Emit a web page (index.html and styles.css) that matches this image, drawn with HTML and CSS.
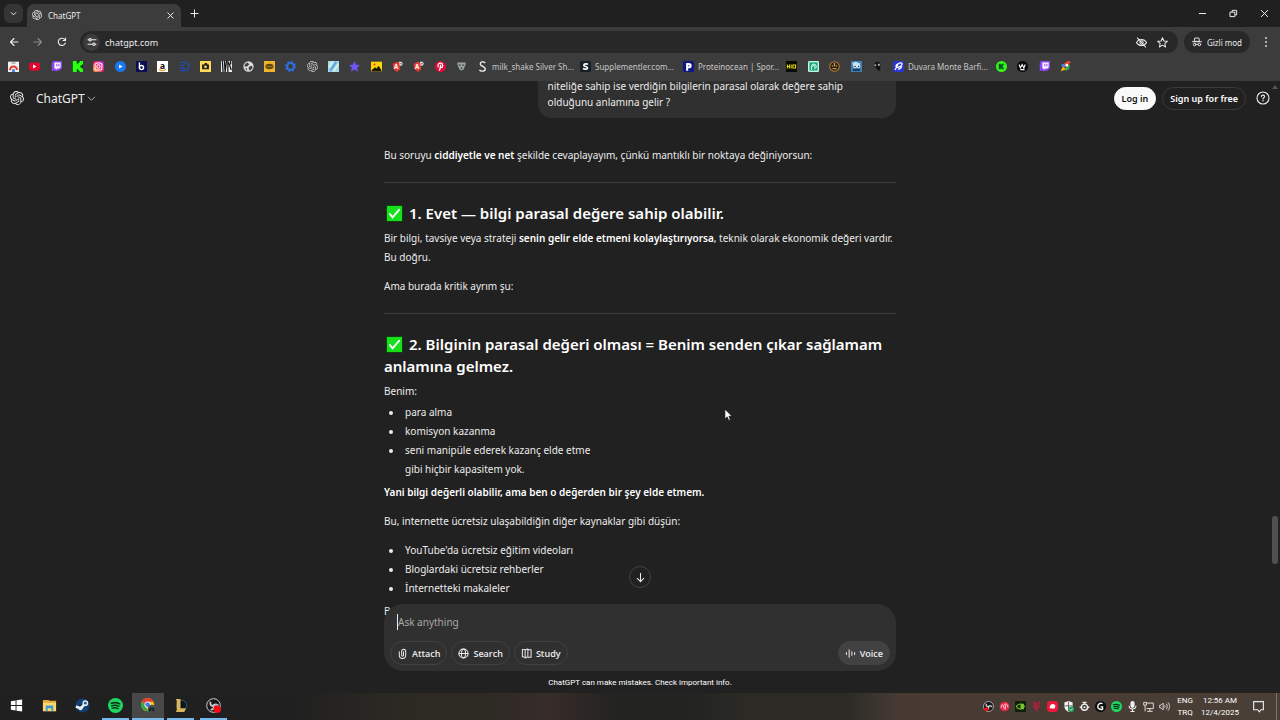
FILE: index.html
```html
<!DOCTYPE html>
<html lang="tr">
<head>
<meta charset="utf-8">
<title>ChatGPT</title>
<link rel="stylesheet" href="styles.css">
</head>
<body>
<svg class="defs" aria-hidden="true">
  <symbol id="knot" viewBox="0 0 24 24"><path fill="currentColor" d="M22.2819 9.8211a5.9847 5.9847 0 0 0-.5157-4.9108 6.0462 6.0462 0 0 0-6.5098-2.9A6.0651 6.0651 0 0 0 4.9807 4.1818a5.9847 5.9847 0 0 0-3.9977 2.9 6.0462 6.0462 0 0 0 .7427 7.0966 5.98 5.98 0 0 0 .511 4.9107 6.051 6.051 0 0 0 6.5146 2.9001A5.9847 5.9847 0 0 0 13.2599 24a6.0557 6.0557 0 0 0 5.7718-4.2058 5.9894 5.9894 0 0 0 3.9977-2.9001 6.0557 6.0557 0 0 0-.7475-7.0729zm-9.022 12.6081a4.4755 4.4755 0 0 1-2.8764-1.0408l.1419-.0804 4.7783-2.7582a.7948.7948 0 0 0 .3927-.6813v-6.7369l2.02 1.1686a.071.071 0 0 1 .038.052v5.5826a4.504 4.504 0 0 1-4.4945 4.4944zm-9.6607-4.1254a4.4708 4.4708 0 0 1-.5346-3.0137l.142.0852 4.783 2.7582a.7712.7712 0 0 0 .7806 0l5.8428-3.3685v2.3324a.0804.0804 0 0 1-.0332.0615L9.74 19.9502a4.4992 4.4992 0 0 1-6.1408-1.6464zM2.3408 7.8956a4.485 4.485 0 0 1 2.3655-1.9728V11.6a.7664.7664 0 0 0 .3879.6765l5.8144 3.3543-2.0201 1.1685a.0757.0757 0 0 1-.071 0l-4.8303-2.7865A4.504 4.504 0 0 1 2.3408 7.872zm16.5963 3.8558L13.1038 8.364 15.1192 7.2a.0757.0757 0 0 1 .071 0l4.8303 2.7913a4.4944 4.4944 0 0 1-.6765 8.1042v-5.6772a.79.79 0 0 0-.407-.667zm2.0107-3.0231l-.142-.0852-4.7735-2.7818a.7759.7759 0 0 0-.7854 0L9.409 9.2297V6.8974a.0662.0662 0 0 1 .0284-.0615l4.8303-2.7866a4.4992 4.4992 0 0 1 6.6802 4.66zM8.3065 12.863l-2.02-1.1638a.0804.0804 0 0 1-.038-.0567V6.0742a4.4992 4.4992 0 0 1 7.3757-3.4537l-.142.0805L8.704 5.459a.7948.7948 0 0 0-.3927.6813zm1.0976-2.3654l2.602-1.4998 2.6069 1.4998v2.9994l-2.5974 1.4997-2.6067-1.4997Z"/></symbol>
  <symbol id="check" viewBox="0 0 18 18"><path fill="#0a3d0a" d="M0 0h18v18H0z"/><path fill="#16e01c" d="M1 1h16v16H1z"/><path fill="none" stroke="#fff" stroke-width="2" stroke-linecap="round" d="M4 9.500l3 3.500L14 5"/></symbol>
  <symbol id="twitch" viewBox="0 0 16 16"><path fill="#8d45f5" d="M3 0h13v10l-4 4H9l-2 2v-2H1V3z"/><path fill="#fff" d="M5 2h9v7l-2 2H9l-2 2v-2H5z"/><path stroke="#8d45f5" stroke-width="1.500" d="M8.500 4v4M11.500 4v4"/></symbol>
  <symbol id="spotify" viewBox="0 0 16 16"><circle cx="8" cy="8" r="8" fill="#1ed760"/><path fill="none" stroke="#10301b" stroke-linecap="round" stroke-width="1.600" d="M3.500 5.600c3-1 6.500-.7 9 .7M4 8.300c2.600-.8 5.400-.5 7.700.7M4.500 10.800c2.200-.6 4.400-.4 6.200.6"/></symbol>
  <symbol id="obs" viewBox="0 0 16 16"><circle cx="8" cy="8" r="7.300" fill="#17171a" stroke="#d8d8d8"/><path fill="none" stroke="#c9c9c9" stroke-width="2" d="M8 8c-3 1-4-2-3-4M8 8c2-2 5-1 5 1M8 8c1 3-1 5-3 4"/></symbol>
  <symbol id="ab" viewBox="0 0 16 16"><path fill="#e13b33" d="M1 4l6-3 4 2 1 9-5 4-5-4z"/><text x="3" y="12" font-size="9" font-weight="700" fill="#fff">A</text><path fill="#ddd" d="M10 1h4l2 3-2 3h-3z"/><path stroke="#444" d="M11 4h4"/></symbol>
</svg>

<div class="browser">
  <header class="tabstrip">
    <button class="tabsearch" aria-label="Sekmelerde ara"><svg class="s9" viewBox="0 0 10 10"><path class="ln" stroke-width="1.500" d="M2.500 4L5 6.500 7.500 4"/></svg></button>
    <div class="tab">
      <svg class="s10"><use href="#knot"/></svg><span>ChatGPT</span>
      <button aria-label="Sekmeyi kapat"><svg class="s9" viewBox="0 0 10 10"><path class="ln" d="M2 2l6 6M8 2L2 8"/></svg></button>
    </div>
    <button class="newtab" aria-label="Yeni sekme"><svg class="s9" viewBox="0 0 10 10"><path class="ln" d="M5 1v8M1 5h8"/></svg></button>
    <div class="winctl">
      <button aria-label="Simge durumuna küçült"><svg class="s9" viewBox="0 0 10 10"><path class="ln" d="M1.500 5h7"/></svg></button>
      <button aria-label="Geri yükle"><svg class="s9" viewBox="0 0 10 10"><path class="ln" d="M1.500 3.500h5v5h-5zM3.500 3V1.500h5v5H7"/></svg></button>
      <button aria-label="Kapat"><svg class="s9" viewBox="0 0 10 10"><path class="ln" d="M1.500 1.500l7 7M8.500 1.500l-7 7"/></svg></button>
    </div>
  </header>

  <nav class="toolbar">
    <button aria-label="Geri"><svg class="s10" viewBox="0 0 10 10"><path class="ln" d="M9 5H1.500M5 1.500L1.500 5 5 8.500"/></svg></button>
    <button class="dim" aria-label="İleri"><svg class="s10" viewBox="0 0 10 10"><path class="ln" d="M1 5h7.500M5 1.500L8.500 5 5 8.500"/></svg></button>
    <button aria-label="Yenile"><svg class="s10" viewBox="0 0 10 10"><path class="ln" d="M8.300 6A3.600 3.600 0 1 1 7.800 2.700M8.500 1v2.500H6"/></svg></button>
    <div class="omnibox">
      <span class="site"><svg class="s10" viewBox="0 0 10 10"><path class="ln" d="M1 2.800h1M5 2.800h4M1 7.200h4M8.500 7.200h.5"/><circle class="ln" cx="3.200" cy="2.800" r="1.200"/><circle class="ln" cx="6.900" cy="7.200" r="1.200"/></svg></span>
      <input type="text" value="chatgpt.com" aria-label="Adres çubuğu">
      <svg class="s12" viewBox="0 0 12 12"><path class="ln" d="M.5 6c2.500-4.500 8.500-4.500 11 0-2.500 4.500-8.500 4.500-11 0zM1.500 1l9 10"/><circle class="ln" cx="6" cy="6" r="1.800"/></svg>
      <svg class="s12" viewBox="0 0 12 12"><path class="ln" d="M6 .8l1.500 3.500 3.900.3-2.900 2.500.9 3.800L6 8.900l-3.400 2 .9-3.800L.6 4.600l3.900-.3z"/></svg>
    </div>
    <button class="incog"><svg class="s10" viewBox="0 0 12 12"><path class="ln" d="M3.800 1.200h4.400l.8 4H3z"/><path class="ln" d="M.5 5.700h11M4.800 9c.8-.4 1.600-.4 2.400 0"/><circle class="ln" cx="3.200" cy="9" r="1.600"/><circle class="ln" cx="8.800" cy="9" r="1.600"/></svg>Gizli mod</button>
    <button class="kebab" aria-label="Menü"><svg class="s10" viewBox="0 0 10 10"><g fill="#d5d5d5"><circle cx="5" cy="1" r="1"/><circle cx="5" cy="5" r="1"/><circle cx="5" cy="9" r="1"/></g></svg></button>
  </nav>

  <nav class="bookmarks" aria-label="Yer işaretleri">
    <div class="icons">
      <a href="#" aria-label="Web Mağazası"><svg viewBox="0 0 16 16"><path fill="#f1f1f1" d="M0 1h16v15H0z"/><path fill="#9aa" d="M5 2h6v2H5z"/><path fill="none" stroke="#e33b2e" stroke-width="3" d="M3 13a5 5 0 0 1 10 0"/><path fill="#3c82f0" d="M6 12h4v4H6z"/></svg></a>
      <a href="#" aria-label="YouTube"><svg viewBox="0 0 16 16"><rect y="2" width="16" height="12" rx="3" fill="#e2062c"/><path fill="#fff" d="M6 5l5 3-5 3z"/></svg></a>
      <a href="#" aria-label="Twitch"><svg><use href="#twitch"/></svg></a>
      <a href="#" aria-label="Kick"><svg viewBox="0 0 16 16"><path fill="#031" d="M0 0h16v16H0z"/><path fill="#2bff12" d="M1 0h6v4h2V2h2V0h5v5h-2v2h-2v2h2v2h2v5h-5v-2H9v-2H7v4H1z"/></svg></a>
      <a href="#" aria-label="Instagram"><svg viewBox="0 0 16 16"><defs><linearGradient id="ig" x1="0" y1="1" x2="1" y2="0"><stop offset="0" stop-color="#ffc13b"/><stop offset=".45" stop-color="#f5235f"/><stop offset="1" stop-color="#a22be0"/></linearGradient></defs><rect width="16" height="16" rx="4" fill="url(#ig)"/><g fill="none" stroke="#fff" stroke-width="1.500"><rect x="3" y="3" width="10" height="10" rx="3"/><circle cx="8" cy="8" r="2.400"/></g></svg></a>
      <a href="#" aria-label="Video"><svg viewBox="0 0 16 16"><circle cx="8" cy="8" r="8" fill="#1778f2"/><path fill="#fff" d="M6 5l5 3-5 3z"/></svg></a>
      <a href="#" aria-label="Bynogame"><svg viewBox="0 0 16 16"><path fill="#0a0d55" d="M0 0h16v16H0z"/><path fill="none" stroke="#fff" stroke-width="2" d="M5 2v9"/><circle cx="8" cy="9.500" r="3" fill="none" stroke="#fff" stroke-width="2"/></svg></a>
      <a href="#" aria-label="Amazon"><svg viewBox="0 0 16 16"><path fill="#fff" d="M0 0h16v16H0z"/><text x="4" y="11" font-size="13" font-weight="700" fill="#111">a</text><path fill="none" stroke="#f79a1c" stroke-width="1.500" d="M3 12c3 2.500 7 2.500 10 0"/></svg></a>
      <a href="#" aria-label="Dolap"><svg viewBox="0 0 16 16"><path fill="none" stroke="#244bb0" stroke-width="2" d="M2 2h7c7 0 7 12 0 12H2M2 6h6M0 10h7l1 4"/></svg></a>
      <a href="#" aria-label="Kamera"><svg viewBox="0 0 16 16"><path fill="#ffd95a" d="M0 0h16v16H0z"/><path fill="#222" d="M3 5h3l1-2h3l1 2h2v7H3z"/><circle cx="8" cy="8.500" r="2" fill="#ffd95a"/></svg></a>
      <a href="#" aria-label="Wannart"><svg viewBox="0 0 16 16"><path fill="#eee" d="M0 0h16v16H0z"/><path fill="none" stroke="#111" stroke-width="1.800" d="M2 0l1 16M5 0l1 16 2-16M10 0v16M11 2l4 11M14 0v5"/></svg></a>
      <a href="#" aria-label="Web"><svg viewBox="0 0 16 16"><circle cx="8" cy="8" r="7.500" fill="#ddd"/><path fill="#444" d="M3 4l4-2 2 3-3 3-4 0zM9 8l4-1 1 3-4 4-2-3zM3 10l3 1v3z"/></svg></a>
      <a href="#" aria-label="Burger"><svg viewBox="0 0 16 16"><path fill="#eeb62d" d="M0 0h16v16H0z"/><ellipse cx="8" cy="8" rx="6" ry="4" fill="#60470f"/><path stroke="#b28a25" d="M3 8h10"/></svg></a>
      <a href="#" aria-label="Ayarlar"><svg viewBox="0 0 16 16"><circle cx="8" cy="8" r="5" fill="none" stroke="#2f6fe0" stroke-width="3"/><circle cx="8" cy="8" r="7" fill="none" stroke="#2f6fe0" stroke-width="2" stroke-dasharray="2.700 2.800"/></svg></a>
      <a href="#" aria-label="ChatGPT"><svg><use href="#knot"/></svg></a>
      <a href="#" aria-label="Harita"><svg viewBox="0 0 16 16"><path fill="#a7dbe8" d="M0 0h16v16H0z"/><path stroke="#5b9fe8" stroke-width="3" d="M3 15L12 1"/><path stroke="#e6f6d8" stroke-width="2" d="M8 15l7-10M1 9l6-8"/></svg></a>
      <a href="#" aria-label="Yıldız"><svg viewBox="0 0 16 16"><path fill="#6d58ef" d="M8 0l2.400 5.300 5.600.5-4.200 3.900 1.400 5.900L8 12.500l-5.200 3.100 1.400-5.900L0 5.800l5.600-.5z"/></svg></a>
      <a href="#" aria-label="Resimler"><svg viewBox="0 0 16 16"><path fill="#ffd407" d="M0 1h16v14H0z"/><path fill="#1a1600" d="M1 13l5-4 2 2 3-4 4 6v2H1z"/><circle cx="5" cy="5" r="1.500" fill="#e33"/></svg></a>
      <a href="#" aria-label="AB"><svg><use href="#ab"/></svg></a>
      <a href="#" aria-label="AB 2"><svg><use href="#ab"/></svg></a>
      <a href="#" aria-label="Pinterest"><svg viewBox="0 0 16 16"><circle cx="8" cy="8" r="8" fill="#e1083a"/><path fill="none" stroke="#fff" stroke-width="1.800" d="M5 9c-2-4 1-6 3.500-5.800C12 3.500 12 9.500 9 9.500 7.500 9.500 7.500 8 8.500 5.500L6.500 14"/></svg></a>
      <a href="#" aria-label="Kalkan"><svg viewBox="0 0 16 16"><path fill="#9aa59f" d="M2 2h12v3l-3 7-3 2-3-2-3-7z"/><path fill="#3d4844" d="M4 5h3v2H4zM9 5h3v2H9zM7 9h2v3H7z"/></svg></a>
    </div>
    <a class="site-link" href="#"><svg viewBox="0 0 16 16"><path fill="none" stroke="#f1f1f1" stroke-width="2" d="M12 3C9 0 4 1 5 5c1 3 7 3 7 6.500S6 16 3.500 13"/></svg>milk_shake Silver Sh...</a>
    <a class="site-link" href="#"><svg viewBox="0 0 16 16"><rect width="16" height="16" rx="2" fill="#16202b"/><path fill="none" stroke="#fff" stroke-width="2.400" d="M11.500 5.200C10 3.500 5.500 4 5.500 6c0 2.300 5.500 1.500 5.500 4 0 2.200-5 2.300-6.500.4"/></svg>Supplementler.com...</a>
    <a class="site-link" href="#"><svg viewBox="0 0 16 16"><rect width="16" height="16" rx="2" fill="#0d1a86"/><path fill="none" stroke="#fff" stroke-width="3" d="M6 14V4.500h2.500c3.500 0 3.500 4.500 0 4.500H6"/></svg>Proteinocean | Spor...</a>
    <div class="icons five">
      <a href="#" aria-label="HIQ"><svg viewBox="0 0 16 16"><path fill="#0b0b00" d="M0 0h16v16H0z"/><path fill="none" stroke="#e6db16" stroke-width="1.500" d="M2 5v6M5 5v6M2 8h3M7.500 5v6M10 5.800h4v4.500h-4z"/></svg></a>
      <a href="#" aria-label="Sarmal"><svg viewBox="0 0 16 16"><rect width="16" height="16" rx="2" fill="#c9f5e4"/><path fill="#17a67a" d="M2 2h12v12H2z"/><path fill="none" stroke="#e8fff7" stroke-width="1.400" d="M5 13V8a3.500 3.500 0 1 1 4 3.500M7 8.500a1.500 1.500 0 1 1 2 .8"/></svg></a>
      <a href="#" aria-label="Maymun"><svg viewBox="0 0 16 16"><circle cx="8" cy="8" r="7" fill="#2a1e10" stroke="#b0803a" stroke-width="1.500"/><path fill="#c9984f" d="M4 6h2v2H4zM10 6h2v2h-2zM5 10h6v2H5zM7 3h2v5H7z"/></svg></a>
      <a href="#" aria-label="Robot"><svg viewBox="0 0 16 16"><path fill="#3e7fb8" d="M0 0h16v16H0z"/><path fill="#bfe4f7" d="M2 3l5-2 7 3-3 3H3z"/><circle cx="6" cy="8" r="2.500" fill="#fff"/><circle cx="11" cy="8" r="2.500" fill="#fff"/><path fill="#12263a" d="M5 7h2v2H5zM10 7h2v2h-2zM3 12h10v2H3z"/></svg></a>
      <a href="#" aria-label="Kedi"><svg viewBox="0 0 16 16"><path fill="#111" d="M4 3l3-2 5 1v11l-2 2-5-6z"/><path fill="#eee" d="M4 5h2v2H4zM9 4h2v3H9z"/></svg></a>
    </div>
    <a class="site-link" href="#"><svg viewBox="0 0 16 16"><rect width="16" height="16" rx="2" fill="#2c35d2"/><path fill="none" stroke="#fff" stroke-width="1.800" d="M3 13l4-8c2-3 7-3 6 0s-6 5-8 4c-2-2 1-5 3-5M7 12c3 0 5-2 6-4"/></svg>Duvara Monte Barfi...</a>
    <div class="icons four">
      <a href="#" aria-label="Kick"><svg viewBox="0 0 16 16"><circle cx="8" cy="8" r="8" fill="#35f51c"/><path fill="#052" d="M4 4h3v2l2-2h3L9.500 8l2.500 4H9l-2-2v2H4z"/></svg></a>
      <a href="#" aria-label="W"><svg viewBox="0 0 16 16"><circle cx="8" cy="8" r="8" fill="#080808"/><path fill="none" stroke="#fff" stroke-width="1.600" d="M3 5l2 5 2.500-5L10 10l2-5M5 12.500h6"/></svg></a>
      <a href="#" aria-label="Twitch"><svg><use href="#twitch"/></svg></a>
      <a href="#" aria-label="Roket"><svg viewBox="0 0 16 16"><path fill="#ea4335" d="M4 5l7-5 5 1-7 8z"/><path fill="#4285f4" d="M1 6l4-2 4 4-4 1z"/><path fill="#34a853" d="M8 9l7-4-2 7-5 3z"/><path fill="#fbbc04" d="M1 15l3-7 5 4z"/><circle cx="10" cy="6" r="2" fill="#fff"/></svg></a>
    </div>
  </nav>
</div>

<main class="app">
  <header class="apphead">
    <a class="logo" href="#" aria-label="ChatGPT"><svg class="s14"><use href="#knot"/></svg></a>
    <button class="model">ChatGPT <svg class="s9" viewBox="0 0 10 10"><path class="ln thin" d="M1.500 3.500L5 7l3.500-3.500"/></svg></button>
    <button class="pill light">Log in</button>
    <button class="pill">Sign up for free</button>
    <button class="help" aria-label="Help"><svg class="s14" viewBox="0 0 14 14"><circle class="ln" cx="7" cy="7" r="6"/><path class="ln" d="M5.400 5.600c0-2 3.200-2 3.200 0C8.600 6.800 7 6.700 7 8"/><circle cx="7" cy="9.800" r=".7" fill="#fff"/></svg></button>
  </header>

  <div class="thread">
    <article class="column">
      <div class="bubble">niteliğe sahip ise verdiğin bilgilerin parasal olarak değere sahip olduğunu anlamına gelir ?</div>
      <div class="answer">
        <p>Bu soruyu <strong>ciddiyetle ve net</strong> şekilde cevaplayayım, çünkü mantıklı bir noktaya değiniyorsun:</p>
        <hr>
        <h2><svg class="tick"><use href="#check"/></svg>1. Evet — bilgi parasal değere sahip olabilir.</h2>
        <p>Bir bilgi, tavsiye veya strateji <strong>senin gelir elde etmeni kolaylaştırıyorsa</strong>, teknik olarak ekonomik değeri vardır.<br>Bu doğru.</p>
        <p>Ama burada kritik ayrım şu:</p>
        <hr>
        <h2><svg class="tick"><use href="#check"/></svg>2. Bilginin parasal değeri olması = Benim senden çıkar sağlamam anlamına gelmez.</h2>
        <p>Benim:</p>
        <ul class="tight">
          <li>para alma</li>
          <li>komisyon kazanma</li>
          <li>seni manipüle ederek kazanç elde etme<br>gibi hiçbir kapasitem yok.</li>
        </ul>
        <p><strong>Yani bilgi değerli olabilir, ama ben o değerden bir şey elde etmem.</strong></p>
        <p>Bu, internette ücretsiz ulaşabildiğin diğer kaynaklar gibi düşün:</p>
        <ul>
          <li>YouTube'da ücretsiz eğitim videoları</li>
          <li>Bloglardaki ücretsiz rehberler</li>
          <li>İnternetteki makaleler</li>
        </ul>
        <p>Ben de</p>
      </div>
    </article>
  </div>

  <div class="dock">
    <button class="down" aria-label="Scroll to bottom"><svg class="s12" viewBox="0 0 12 12"><path class="ln" d="M6 1.500v9M2.500 7L6 10.500 9.500 7"/></svg></button>
    <form class="composer">
      <input type="text" placeholder="Ask anything" aria-label="Ask anything">
      <div class="tools">
        <button type="button"><svg class="s12" viewBox="0 0 12 12"><path class="ln" d="M2.500 4v4a3.500 3.500 0 0 0 7 0V3.500a2.200 2.200 0 0 0-4.400 0V8a1 1 0 0 0 2 0V4"/></svg>Attach</button>
        <button type="button"><svg class="s12" viewBox="0 0 12 12"><circle class="ln" cx="6" cy="6" r="5"/><ellipse class="ln" cx="6" cy="6" rx="2.200" ry="5"/><path class="ln" d="M1 6h10"/></svg>Search</button>
        <button type="button"><svg class="s12" viewBox="0 0 12 12"><path class="ln" d="M4.500 2L1.500 1.500v8l3 .5zM4.500 2l3-1v8.500L4.500 11M7.500 2H11v8H8"/></svg>Study</button>
        <button type="button" class="voice"><svg class="s12" viewBox="0 0 12 12"><path class="ln" d="M1.500 5v2M4.500 2v8M7.500 4v4M10.500 5v2"/></svg>Voice</button>
      </div>
    </form>
    <p class="note">ChatGPT can make mistakes. Check important info.</p>
  </div>
  <div class="scroll" aria-hidden="true"></div>
  <div class="arrow" aria-hidden="true"></div>
</main>

<footer class="taskbar">
  <button class="task" aria-label="Başlat"><svg viewBox="0 0 16 16"><path fill="#fff" d="M2 3.500l5-.8v4.800H2zM8 2.500l6-.9v5.900H8zM2 8.500h5v4.800l-5-.8zM8 8.500h6v5.900l-6-.9z"/></svg></button>
  <button class="task" aria-label="Dosya Gezgini"><svg viewBox="0 0 16 16"><path fill="#e2ab39" d="M1 2h6l1 1h7v11H1z"/><path fill="#fbd970" d="M1 5h14v9H1z"/><path fill="#3f98cf" d="M4 8h8v6h-2v-3H6v3H4z"/></svg></button>
  <button class="task" aria-label="Steam"><svg viewBox="0 0 16 16"><circle cx="8" cy="8" r="7.500" fill="#123f74"/><path stroke="#e4eef7" stroke-width="3" d="M1 9l5 2 5-5"/><circle cx="11" cy="5.500" r="3" fill="#e4eef7"/><circle cx="11" cy="5.500" r="1.500" fill="#2b5684"/><circle cx="6" cy="11" r="2" fill="#e4eef7"/></svg></button>
  <button class="task run" aria-label="Spotify"><svg><use href="#spotify"/></svg></button>
  <button class="task run now" aria-label="Chrome"><svg viewBox="0 0 16 16"><circle cx="7" cy="7" r="7" fill="#fbc116"/><path fill="#e33b2e" d="M1 3.500A7 7 0 0 1 13.400 4H7L4 8z"/><path fill="#2da94f" d="M1 3.500L4.500 9 8 14A7 7 0 0 1 1 3.500z"/><circle cx="7" cy="7" r="3.300" fill="#fff"/><circle cx="7" cy="7" r="2.500" fill="#3c7ee8"/><circle cx="11.500" cy="11.500" r="4.300" fill="#4c5358"/><path fill="#171a1c" d="M9 10h5v1.500H9zM8.500 12h2.500v2H8.500zM12 12h2.500v2H12z"/></svg></button>
  <button class="task run" aria-label="League of Legends"><svg viewBox="0 0 16 16"><circle cx="9" cy="8" r="5.500" fill="#0c171c" stroke="#2c6171"/><path fill="#dcb45c" d="M3 1h5v10h6l-2 4H3l1-2V3z"/></svg></button>
  <button class="task run" aria-label="OBS"><svg viewBox="0 0 16 16"><use href="#obs"/><circle cx="12" cy="12" r="4" fill="#f20c15"/></svg></button>
  <div class="tray">
    <svg viewBox="0 0 16 16"><use href="#obs"/><circle cx="5" cy="12" r="3" fill="#f20c15"/></svg>
    <svg viewBox="0 0 16 16"><circle cx="8" cy="8" r="7" fill="#e8274a"/><path fill="none" stroke="#fff" stroke-width="1.200" d="M3 10c1-6 3-6 4-1s4 3 2-2 4-3 4 2"/></svg>
    <svg viewBox="0 0 16 16"><path fill="#10200c" d="M0 0h16v16H0z"/><path fill="none" stroke="#76c52e" stroke-width="1.500" d="M2 8c3-5 8-5 12 0-4 5-9 5-12 0z"/><path fill="#76c52e" d="M8 4h5v8H8z"/></svg>
    <svg viewBox="0 0 16 16"><path fill="none" stroke="#b3203a" stroke-width="2.500" d="M3 1l5 5 5-5M3 6l5 5 5-5M8 8v7"/></svg>
    <svg viewBox="0 0 16 16"><rect width="16" height="16" rx="5" fill="#ec1739"/><path fill="#fff" d="M4 9c0-6 9-6 8-1l-1 3H5z"/></svg>
    <svg viewBox="0 0 16 16"><path fill="#f3f3f3" d="M8 0l6 2v6c0 4-3 6-6 8-3-2-6-4-6-8V2z"/><path stroke="#333" d="M8 1v14M2 7h12"/><circle cx="12" cy="12" r="4" fill="#1ea65a"/><path fill="none" stroke="#fff" d="M10 12l1.500 1.500L14 11"/></svg>
    <svg viewBox="0 0 16 16"><circle cx="8" cy="9" r="4.500" fill="none" stroke="#eee" stroke-width="2"/><circle cx="8" cy="9" r="1.500" fill="#eee"/><path stroke="#eee" stroke-width="2" d="M5 2h6M8 1v4M1 9h3M12 9h3"/></svg>
    <svg viewBox="0 0 16 16"><circle cx="8" cy="8" r="8" fill="#0b0b0b"/><path fill="none" stroke="#fff" stroke-width="2" d="M11 4C7 2 4 5 4 8s3 5 7 4V8.500H8"/></svg>
    <svg><use href="#spotify"/></svg>
    <svg viewBox="0 0 16 16"><rect x="5" width="6" height="10" rx="3" fill="#f2f2f2"/><path fill="none" stroke="#f2f2f2" stroke-width="1.500" d="M3 7c0 6 10 6 10 0M8 12v3M5 15.200h6"/></svg>
    <svg viewBox="0 0 16 16"><path fill="none" stroke="#e3e0dd" stroke-width="1.400" d="M5 3h10v8H5M10 11v4M6 15h8M1 2h4v4H1zM3 6v9"/></svg>
    <svg viewBox="0 0 16 16"><path fill="none" stroke="#e3e0dd" stroke-width="1.300" d="M1 6h2l3-3v10l-3-3H1zM8 6c1 1 1 3 0 4M10.500 4c2 2 2 6 0 8M13 2c3 3 3 9 0 12"/></svg>
    <div class="stack">ENG<br>TRQ</div>
    <time class="stack clock">12:56 AM<br>12/4/2025</time>
    <svg class="bell" viewBox="0 0 16 16"><path fill="none" stroke="#e8e8e8" stroke-width="1.400" d="M2 2h12v10h-3l-2 2.500L7 12H2z"/></svg>
  </div>
</footer>
<svg class="cursor" viewBox="0 0 10 15" aria-hidden="true"><path fill="#fff" stroke="#111" stroke-width=".8" d="M1 1v11l2.600-2.400L5.200 13.500l1.900-.8-1.600-3.800H9z"/></svg>
</body>
</html>
```
FILE: styles.css
```css
* { box-sizing: border-box; }
html, body { height: 100%; }
body {
  margin: 0;
  display: flex;
  flex-direction: column;
  overflow: hidden;
  background: #212121;
  color: #ececec;
  font: 10px/19px "Noto Sans", "Open Sans", sans-serif;
}
button, input { font: inherit; color: inherit; background: none; border: 0; padding: 0; margin: 0; outline: 0; }
button { display: flex; align-items: center; justify-content: center; white-space: nowrap; }
a { color: inherit; text-decoration: none; }
svg { display: block; flex: none; overflow: visible; }
.defs { position: absolute; width: 0; height: 0; }
.ln { fill: none; stroke: currentColor; stroke-width: 1.1; stroke-linecap: round; stroke-linejoin: round; }
.thin { opacity: .7; }
.s9 { width: 9px; height: 9px; }
.s10 { width: 10px; height: 10px; }
.s12 { width: 11px; height: 11px; }
.s14 { width: 14px; height: 14px; }

/* browser chrome */
.browser { flex: none; background: #3c3c3c; font-size: 8px; }
.tabstrip { display: flex; align-items: center; height: 27px; padding-left: 4px; background: #1f201f; }
.tabsearch { width: 19px; height: 19px; border-radius: 6px; background: #343534; }
.tab {
  display: flex; align-items: center; gap: 6px;
  align-self: flex-end;
  width: 154px; height: 23px; margin-left: 4px; padding: 0 6px 1px 5px;
  border-radius: 7px 7px 0 0; background: #3c3c3c;
}
.tab button { margin-left: auto; }
.newtab { margin-left: 9px; }
.winctl { display: flex; margin-left: auto; }
.winctl button { width: 31px; height: 27px; }
.toolbar { display: flex; align-items: center; height: 28px; padding: 2px 4px 0 2px; }
.toolbar > button { width: 24px; height: 22px; }
.dim { opacity: .45; }
.omnibox {
  display: flex; align-items: center; gap: 10px; flex: 1;
  height: 22px; margin: 0 6px; padding: 0 10px 0 3px;
  border-radius: 11px; background: #282828; font-size: 9px;
}
.site { display: grid; place-items: center; width: 17px; height: 17px; border-radius: 9px; background: #3c3c3c; }
.omnibox input { flex: 1; min-width: 0; margin-left: -5px; }
.toolbar .incog { width: 66px; gap: 5px; border-radius: 11px; background: #282828; }
.toolbar .kebab { width: 28px; margin-left: 2px; margin-right: -4px; }
.bookmarks { display: flex; align-items: center; gap: 10px; height: 26px; padding: 0 8px 3px; color: #c7c7c7; white-space: nowrap; }
.icons { display: flex; justify-content: space-between; width: 459px; }
.icons svg, .site-link svg { width: 11px; height: 11px; }
.five { width: 97px; }
.four { width: 75px; }
.site-link { display: flex; align-items: center; gap: 4px; width: 93px; }

/* application */
.app { position: relative; flex: 1; min-height: 0; }
.apphead {
  position: absolute; inset: 0 0 auto 0; z-index: 2;
  display: flex; align-items: center; gap: 6px;
  height: 34px; padding: 0 10px;
}
.model { gap: 2px; margin: 0 auto 0 6px; font-size: 12px; }
.pill { height: 23px; padding: 0 7px; border: 1px solid #3a3a3a; border-radius: 12px; font-size: 9px; font-weight: 600; color: #fff; }
.pill.light { background: #f9f9f9; border-color: #f9f9f9; color: #111; }
.help { margin-left: 4px; }
.thread { height: 100%; overflow: hidden; }
.column { display: flex; flex-direction: column; max-width: 512px; margin: 0 auto; }
.bubble {
  align-self: flex-end; width: 70%; height: 37px; padding: 0 10px 8px;
  display: flex; align-items: flex-end;
  border-radius: 0 0 14px 14px; background: #303030; line-height: 16px;
}
.answer { padding-top: 28px; }
.answer p { margin: 0; }
.answer p + p { margin-top: 10px; }
strong { font-weight: 600; color: #fff; }
hr { margin: 17px 0 19px; border: 0; border-top: 1px solid #3d3d3d; }
h2 { margin: 0 0 5px; font-size: 15px; line-height: 22px; font-weight: 600; color: #fff; }
.tick { display: inline-block; width: 17px; height: 17px; margin: 0 6px 0 2px; vertical-align: -3px; }
.answer ul { margin: 10px 0 4px; padding-left: 19px; }
.answer li { padding-left: 2px; }
.answer .tight { margin-top: 2px; }

.dock { position: absolute; inset: auto 0 0 0; display: flex; flex-direction: column; align-items: center; }
.down { width: 22px; height: 22px; margin-bottom: 16px; border: 1px solid #414141; border-radius: 11px; background: #212121; }
.composer { width: 512px; max-width: 100%; padding: 10px 6px 6px; border-radius: 19px; background: #303030; }
.composer input { display: block; width: calc(100% - 14px); margin-left: 7px; padding: 0; border-left: 1px solid #eee; height: 16px; line-height: 16px; }
.composer input::placeholder { color: #a8a8a8; opacity: 1; }
.tools { display: flex; gap: 4px; margin-top: 11px; font: 600 9px/19px "Open Sans", sans-serif; }
.tools button { height: 24px; gap: 4px; padding: 0 6px; border: 1px solid #414141; border-radius: 12px; }
.tools .voice { margin-left: auto; border-color: #424242; background: #424242; }
.note { align-self: stretch; margin: 0; padding: 3px 0 2px; text-align: center; font: 8px/17px Roboto, sans-serif; background: #212121; color: #fff; }
.scroll { position: absolute; right: 2px; top: 71%; width: 6px; height: 48px; border-radius: 3px; background: #505050; }
.arrow { position: absolute; right: 2px; top: 4px; border: 3px solid transparent; border-top: 0; border-bottom: 4px solid #555; }

/* desktop taskbar */
.taskbar {
  flex: none; display: flex; align-items: stretch; height: 27px;
  background: linear-gradient(90deg, #202020 0 23%, #2d2a24 32% 38%, #372c29 43%, #232321 48% 54%, #2b2a25 58% 66%, #463a33 70%, #4a3f37 100%);
}
.task { width: 33px; border-bottom: 2px solid transparent; }
.task svg { width: 15px; height: 15px; }
.run { border-color: #76b9ed; width: 27px; margin: 0 3px; }
.run.now { width: 32px; margin: 0; background: #484848; }
.tray { display: flex; align-items: center; gap: 5px; margin-left: auto; padding-right: 11px; border-right: 1px solid #80766f; margin-right: 3px; }
.tray svg { width: 11px; height: 11px; }
.stack { margin-left: 2px; font: 8px/12px Roboto, sans-serif; text-align: center; color: #fff; }
.clock { margin-left: 3px; }
.tray .bell { width: 13px; height: 13px; margin-left: 8px; }
.cursor { position: absolute; left: 724px; top: 408px; width: 9px; height: 14px; z-index: 5; }
```
